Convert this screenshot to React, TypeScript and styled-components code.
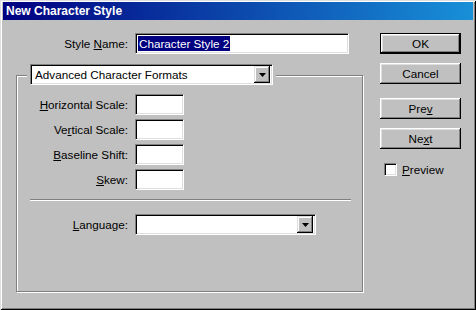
import styled, { createGlobalStyle } from "styled-components";

const Global = createGlobalStyle`
  html, body { margin: 0; padding: 0; background: #c0c0c0; }
  body { font-family: "Liberation Sans", Arial, sans-serif; font-size: 11.7px; color: #000; }
`;

const Window = styled.div`
  width: 476px;
  height: 310px;
  box-sizing: border-box;
  padding: 2px 3px 3px 3px;
  background: #c0c0c0;
  box-shadow: inset 1px 1px #dfdfdf, inset -1px -1px #000, inset 2px 2px #fff,
    inset -2px -2px #808080;
`;

const TitleBar = styled.div`
  height: 18px;
  display: flex;
  align-items: center;
  padding-left: 3px;
  background: linear-gradient(to right, #000080, #1890d8);
  color: #fff;
  font-weight: bold;
  font-size: 12px;
`;

const Body = styled.div`
  display: flex;
  padding: 13px 0 0 13px;
`;

const Main = styled.div`
  width: 347px;
  display: flex;
  flex-direction: column;
`;

const Side = styled.div`
  margin-left: 17px;
  display: flex;
  flex-direction: column;
`;

const Row = styled.div`
  display: flex;
  align-items: center;
  gap: 7px;
`;

const Label = styled.span<{ $w: number }>`
  width: ${(p) => p.$w}px;
  text-align: right;
  white-space: nowrap;
`;

const Sunken = styled.div<{ $w: number }>`
  width: ${(p) => p.$w}px;
  height: 21px;
  box-sizing: border-box;
  background: #fff;
  border-top: 1px solid #808080;
  border-left: 1px solid #808080;
  border-bottom: 1px solid #fff;
  border-right: 1px solid #fff;
  box-shadow: inset 1px 1px #000, inset -1px -1px #dfdfdf;
  display: flex;
  align-items: center;
  padding: 0 2px 0 2px;
  white-space: nowrap;
  overflow: hidden;
`;

const Selected = styled.span`
  background: #000080;
  color: #fff;
  padding: 1px 1px;
`;

const ComboText = styled.span`
  flex: 1;
  padding-left: 2px;
`;

const ArrowBtn = styled.div`
  width: 16px;
  height: 17px;
  box-sizing: border-box;
  background: #c0c0c0;
  box-shadow: inset -1px -1px #000, inset 1px 1px #dfdfdf, inset -2px -2px #808080,
    inset 2px 2px #fff;
  display: flex;
  align-items: center;
  justify-content: center;
`;

const Group = styled.div`
  margin-top: 21px;
  height: 217px;
  box-sizing: border-box;
  border: 1px solid #808080;
  box-shadow: inset 1px 1px #fff, 1px 1px #fff;
  display: flex;
  flex-direction: column;
`;

const GroupHeader = styled.div`
  margin: -12px 0 0 10px;
  padding: 0 3px;
  background: #c0c0c0;
  align-self: flex-start;
`;

const Fields = styled.div`
  margin-top: 9px;
  display: flex;
  flex-direction: column;
  gap: 4px;
`;

const Separator = styled.div`
  margin: 9px 11px 0 13px;
  border-top: 1px solid #808080;
  border-bottom: 1px solid #fff;
`;

const LangRow = styled(Row)`
  margin-top: 13px;
`;

const Button = styled.div<{ $default?: boolean; $gap: number }>`
  margin-top: ${(p) => p.$gap}px;
  width: 81px;
  height: 21px;
  box-sizing: border-box;
  display: flex;
  align-items: center;
  justify-content: center;
  background: #c0c0c0;
  ${(p) =>
    p.$default
      ? `border: 1px solid #000; box-shadow: inset -1px -1px #000, inset 1px 1px #fff, inset -2px -2px #808080, inset 2px 2px #dfdfdf;`
      : `box-shadow: inset -1px -1px #000, inset 1px 1px #fff, inset -2px -2px #808080, inset 2px 2px #dfdfdf;`}
`;

const CheckRow = styled.div`
  margin: 14px 0 0 4px;
  display: flex;
  align-items: center;
  gap: 5px;
`;

const CheckBox = styled.div`
  width: 13px;
  height: 13px;
  box-sizing: border-box;
  background: #fff;
  border-top: 1px solid #808080;
  border-left: 1px solid #808080;
  border-bottom: 1px solid #fff;
  border-right: 1px solid #fff;
  box-shadow: inset 1px 1px #000, inset -1px -1px #dfdfdf;
`;

const Arrow = () => (
  <svg width="7" height="4" viewBox="0 0 7 4">
    <path d="M0 0h7L3.5 4z" fill="#000" />
  </svg>
);

const Combo = ({ w, text }: { w: number; text?: string }) => (
  <Sunken $w={w}>
    <ComboText>{text}</ComboText>
    <ArrowBtn>
      <Arrow />
    </ArrowBtn>
  </Sunken>
);

const fields: [string, string, string][] = [
  ["", "H", "orizontal Scale:"],
  ["Ve", "r", "tical Scale:"],
  ["", "B", "aseline Shift:"],
  ["", "S", "kew:"],
];

export default function App() {
  return (
    <>
      <Global />
      <Window>
        <TitleBar>New Character Style</TitleBar>
        <Body>
          <Main>
            <Row>
              <Label $w={112}>
                Style <u>N</u>ame:
              </Label>
              <Sunken $w={214}>
                <Selected>Character Style 2</Selected>
              </Sunken>
            </Row>
            <Group>
              <GroupHeader>
                <Combo w={243} text="Advanced Character Formats" />
              </GroupHeader>
              <Fields>
                {fields.map(([a, u, b]) => (
                  <Row key={u}>
                    <Label $w={111}>
                      {a}
                      <u>{u}</u>
                      {b}
                    </Label>
                    <Sunken $w={49} />
                  </Row>
                ))}
              </Fields>
              <Separator />
              <LangRow>
                <Label $w={111}>
                  <u>L</u>anguage:
                </Label>
                <Combo w={181} />
              </LangRow>
            </Group>
          </Main>
          <Side>
            <Button $default $gap={0}>
              OK
            </Button>
            <Button $gap={9}>Cancel</Button>
            <Button $gap={14}>
              Pre<u>v</u>
            </Button>
            <Button $gap={9}>
              Ne<u>x</u>t
            </Button>
            <CheckRow>
              <CheckBox />
              <span>
                <u>P</u>review
              </span>
            </CheckRow>
          </Side>
        </Body>
      </Window>
    </>
  );
}
